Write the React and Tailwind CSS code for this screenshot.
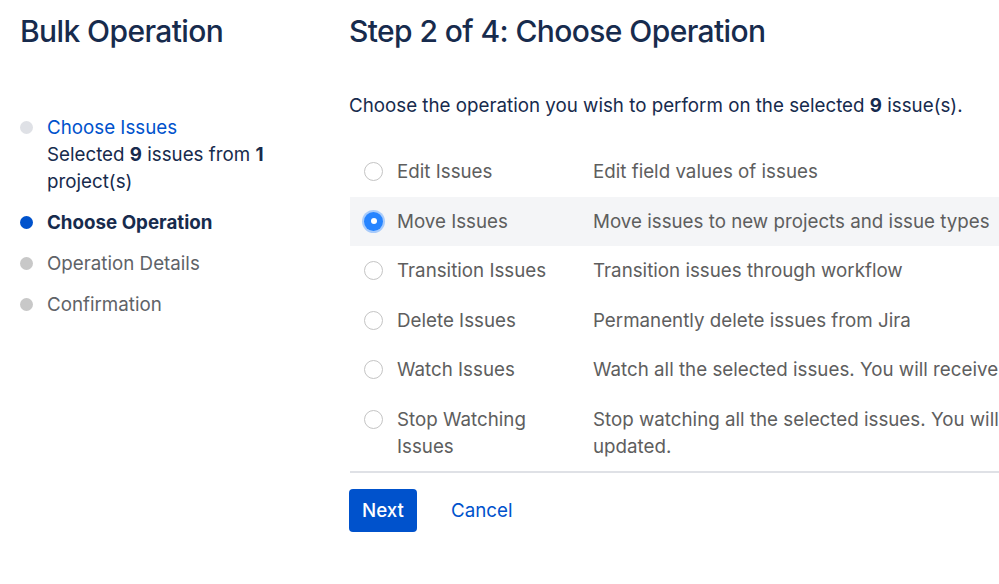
import React from "react";

const ops = [
  { label: "Edit Issues", desc: "Edit field values of issues" },
  { label: "Move Issues", desc: "Move issues to new projects and issue types", selected: true },
  { label: "Transition Issues", desc: "Transition issues through workflow" },
  { label: "Delete Issues", desc: "Permanently delete issues from Jira" },
  { label: "Watch Issues", desc: "Watch all the selected issues. You will receive notifications when any of them are updated." },
  {
    label: "Stop Watching Issues",
    desc: (
      <>
        Stop watching all the selected issues. You will no longer receive notifications when they are
        <br />
        updated.
      </>
    ),
  },
];

function Radio({ selected }) {
  if (selected) {
    return (
      <span className="flex h-[19px] w-[19px] items-center justify-center rounded-full bg-[#2684ff] shadow-[0_0_0_2px_rgba(76,154,255,0.45)]">
        <span className="h-[6px] w-[6px] rounded-full bg-white" />
      </span>
    );
  }
  return <span className="block h-[19px] w-[19px] rounded-full border-[1.5px] border-[#c4c4c4] bg-white" />;
}

export default function App() {
  return (
    <div
      className="flex h-[584px] w-[999px] overflow-hidden bg-white text-[18.75px] leading-[27px] text-[#172b4d]"
      style={{ fontFamily: "Inter, 'Liberation Sans', sans-serif" }}
    >
      <aside className="w-[349px] shrink-0 pl-5">
        <h1 className="mt-[13px] text-[30px] font-medium leading-[36px] tracking-[-0.02em] text-[#172b4d]">
          Bulk Operation
        </h1>
        <ol className="mt-[65px] flex flex-col gap-[14px]">
          <li className="flex gap-[14px]">
            <span className="mt-[7px] h-[13px] w-[13px] shrink-0 rounded-full bg-[#dfe1e6]" />
            <div className="w-[240px]">
              <a className="text-[#0052cc]">Choose Issues</a>
              <div>
                Selected <b>9</b> issues from <b>1</b> project(s)
              </div>
            </div>
          </li>
          <li className="flex gap-[14px]">
            <span className="mt-[7px] h-[13px] w-[13px] shrink-0 rounded-full bg-[#0052cc]" />
            <span className="font-bold">Choose Operation</span>
          </li>
          <li className="flex gap-[14px]">
            <span className="mt-[7px] h-[13px] w-[13px] shrink-0 rounded-full bg-[#c8c8c8]" />
            <span className="text-[#5f6368]">Operation Details</span>
          </li>
          <li className="flex gap-[14px]">
            <span className="mt-[7px] h-[13px] w-[13px] shrink-0 rounded-full bg-[#c8c8c8]" />
            <span className="text-[#5f6368]">Confirmation</span>
          </li>
        </ol>
      </aside>
      <main className="min-w-0 flex-1 overflow-hidden">
        <h2 className="mt-[13px] whitespace-nowrap text-[30px] font-medium leading-[36px] tracking-[-0.02em]">
          Step 2 of 4: Choose Operation
        </h2>
        <p className="mt-[43px] whitespace-nowrap">
          Choose the operation you wish to perform on the selected <b>9</b> issue(s).
        </p>
        <div className="mt-[28px] ml-px w-[1200px] border-b-2 border-[#dfe1e6]">
          {ops.map((op) => (
            <div
              key={op.label}
              className={`flex py-[11.25px] text-[#5e5e5e] ${op.selected ? "bg-[#f4f5f7]" : ""}`}
            >
              <div className="flex h-[27px] w-[47px] shrink-0 items-center pl-[14px]">
                <Radio selected={op.selected} />
              </div>
              <div className="w-[196px] shrink-0 pr-4">{op.label}</div>
              <div className="shrink-0 whitespace-nowrap">{op.desc}</div>
            </div>
          ))}
        </div>
        <div className="mt-[16px] flex items-center">
          <button className="h-[43px] w-[68px] rounded-[4px] bg-[#0052cc] font-medium text-white">Next</button>
          <a className="ml-[34px] text-[#0052cc]">Cancel</a>
        </div>
      </main>
    </div>
  );
}
